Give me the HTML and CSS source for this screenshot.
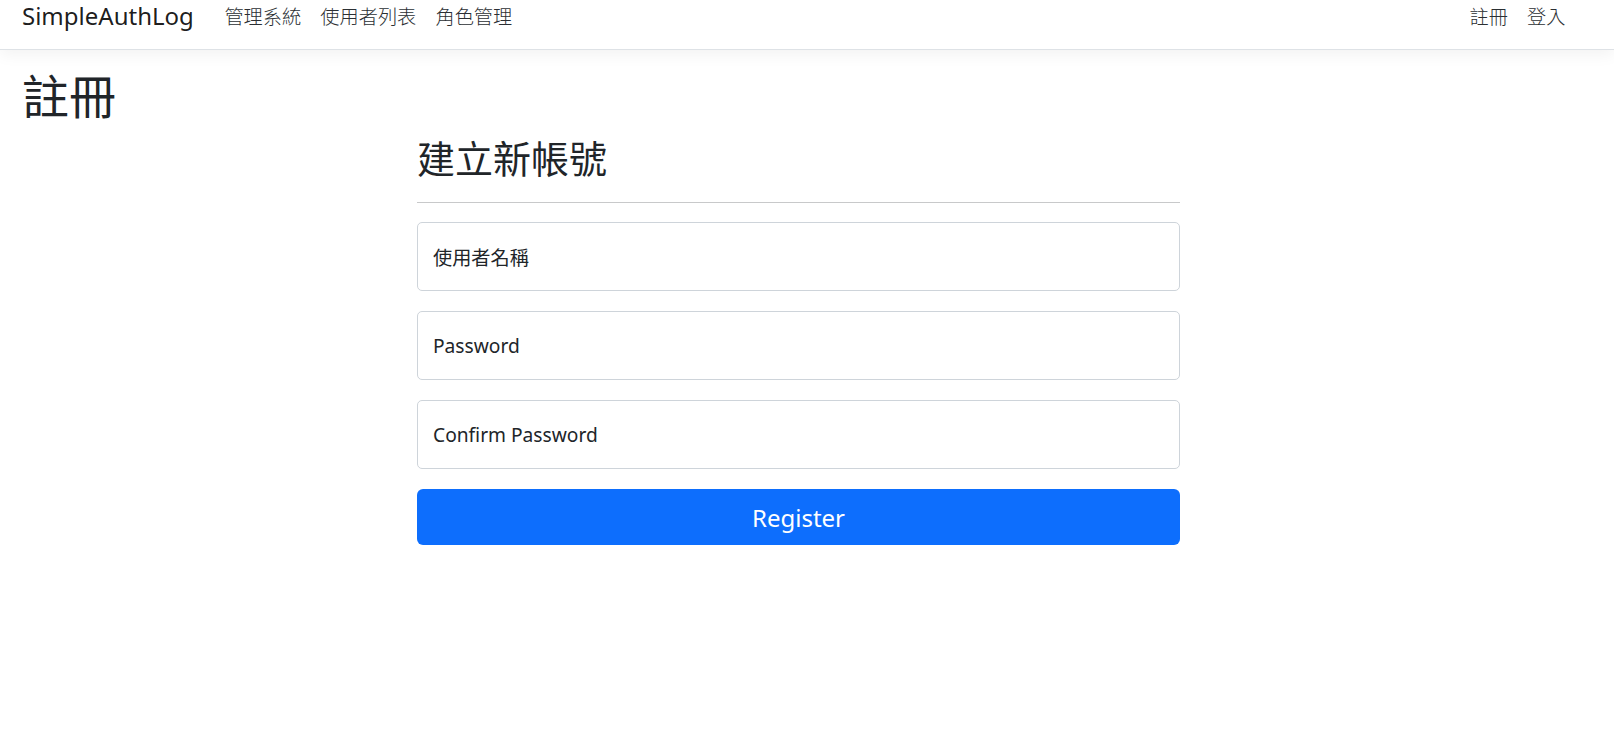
FILE: index.html
```html
<!DOCTYPE html>
<html lang="zh-Hant">
<head>
<meta charset="utf-8">
<title>註冊 - SimpleAuthLog</title>
<link rel="stylesheet" href="styles.css">
</head>
<body>
<header class="navbar">
  <a class="brand" href="#">SimpleAuthLog</a>
  <nav class="nav-left">
    <a class="nav-link" href="#">管理系統</a>
    <a class="nav-link" href="#">使用者列表</a>
    <a class="nav-link" href="#">角色管理</a>
  </nav>
  <nav class="nav-right">
    <a class="nav-link" href="#">註冊</a>
    <a class="nav-link" href="#">登入</a>
  </nav>
</header>
<main class="page">
  <h1 class="page-title">註冊</h1>
  <div class="form-col">
    <form class="register-form">
      <h2 class="form-title">建立新帳號</h2>
      <hr class="divider">
      <div class="field"><span class="field-label">使用者名稱</span></div>
      <div class="field"><span class="field-label">Password</span></div>
      <div class="field"><span class="field-label">Confirm Password</span></div>
      <button type="button" class="btn-primary">Register</button>
    </form>
  </div>
</main>
</body>
</html>
```
FILE: styles.css
```css
* { box-sizing: border-box; }
html, body { margin: 0; padding: 0; background: #fff; }
body {
  font-family: "Noto Sans", "Noto Sans CJK TC", sans-serif;
  color: #212529;
  font-size: 19.2px;
}
a { text-decoration: none; color: inherit; }

.navbar {
  display: flex;
  align-items: flex-start;
  height: 50px;
  padding: 0 39px 0 22px;
  border-bottom: 1px solid #dee2e6;
  box-shadow: 0 4.8px 14.4px rgba(0,0,0,.05);
  background: #fff;
}
.brand {
  font-size: 24px;
  line-height: 32px;
  color: rgba(0,0,0,.9);
  margin-right: 21px;
}
.nav-left, .nav-right { display: flex; }
.nav-right { margin-left: auto; }
.nav-link {
  font-size: 19.2px;
  line-height: 32px;
  padding: 0 9.6px;
  color: #2b2f33;
  font-family: "Noto Sans CJK TC", sans-serif;
  font-weight: 300;
}

.page { padding: 14px 22px 0; }
.page-title {
  font-family: "Noto Sans CJK TC", sans-serif;
  font-weight: 400;
  font-size: 47px;
  line-height: 60px;
  margin: 0 0 9px;
}
.form-col { width: 763px; margin-left: 395px; }
.form-title {
  font-family: "Noto Sans CJK TC", sans-serif;
  font-weight: 400;
  font-size: 38px;
  line-height: 48px;
  margin: 0;
}
.divider {
  border: 0;
  border-top: 1px solid #c8c9ca;
  margin: 21px 0 19px;
}
.field {
  height: 69px;
  border: 1px solid #ced4da;
  border-radius: 5px;
  display: flex;
  align-items: center;
  padding: 0 15px;
  margin-bottom: 20px;
}
.field-label {
  font-size: 19.2px;
  color: #212529;
}
.btn-primary {
  display: block;
  width: 100%;
  height: 56px;
  border: 0;
  border-radius: 6px;
  background: #0d6efd;
  color: #fff;
  font-family: inherit;
  font-size: 24px;
  margin-top: 1px;
}
```
